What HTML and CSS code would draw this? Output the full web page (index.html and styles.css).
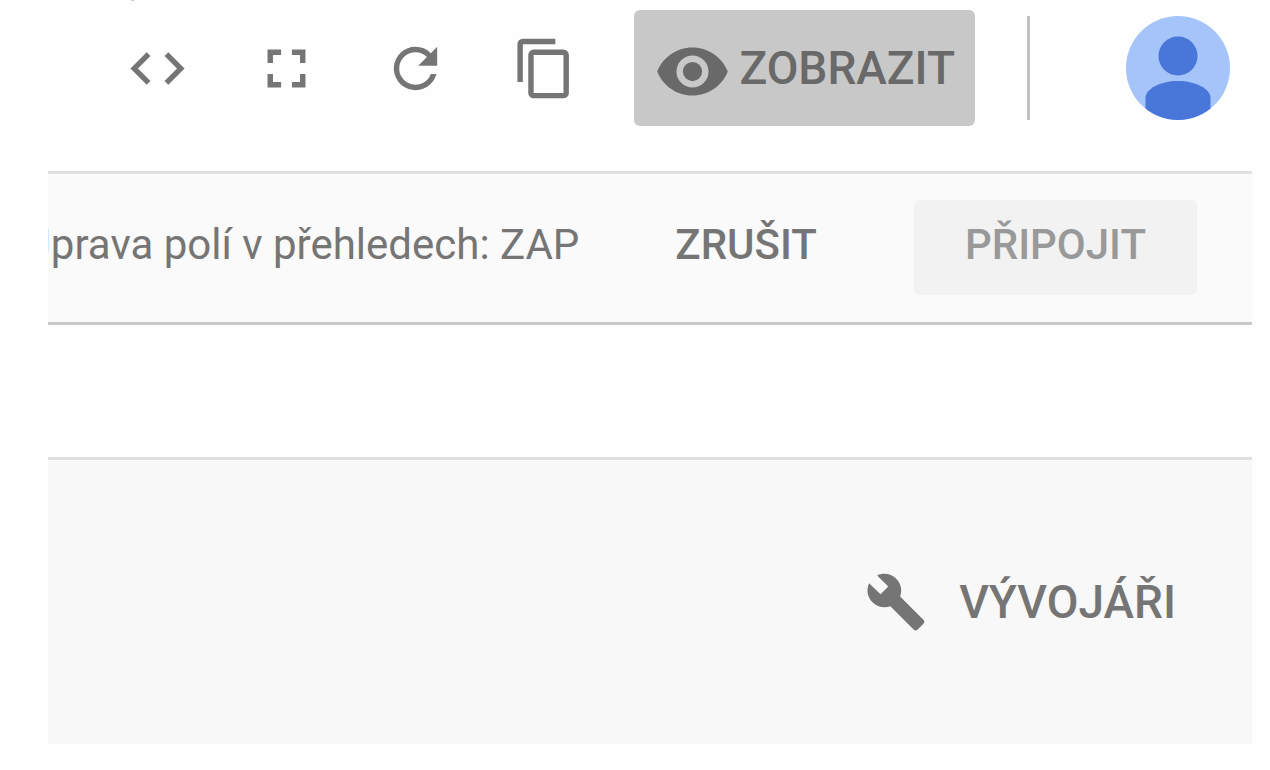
FILE: index.html
```html
<!DOCTYPE html>
<html lang="cs">
<head>
<meta charset="utf-8">
<title>Úprava polí v přehledech</title>
<link rel="stylesheet" href="styles.css">
</head>
<body>
<header class="toolbar">
  <div class="tools">
    <button class="icon-button" type="button" aria-label="Vložit kód"><svg class="icon" viewBox="0 0 24 24"><path d="M9.4 16.6 4.8 12l4.6-4.6L8 6l-6 6 6 6zM14.6 16.6 19.2 12l-4.6-4.6L16 6l6 6-6 6z"/></svg></button>
    <button class="icon-button" type="button" aria-label="Celá obrazovka"><svg class="icon" viewBox="0 0 24 24"><path d="M7 14H5v5h5v-2H7zM5 10h2V7h3V5H5zM17 17h-3v2h5v-5h-2zM14 5v2h3v3h2V5z"/></svg></button>
    <button class="icon-button" type="button" aria-label="Obnovit"><svg class="icon" viewBox="0 0 24 24"><path d="M17.65 6.35A7.96 7.96 0 0 0 12 4a8 8 0 1 0 7.73 10h-2.08A6 6 0 1 1 12 6c1.66 0 3.14.69 4.22 1.78L13 11h7V4z"/></svg></button>
    <button class="icon-button" type="button" aria-label="Kopírovat"><svg class="icon" viewBox="0 0 24 24"><path d="M16 1H4a2 2 0 0 0-2 2v14h2V3h12zm3 4H8a2 2 0 0 0-2 2v14a2 2 0 0 0 2 2h11a2 2 0 0 0 2-2V7a2 2 0 0 0-2-2zm0 16H8V7h11z"/></svg></button>
  </div>
  <button class="view-button" type="button"><svg class="view-icon" viewBox="0 0 24 24"><path d="M12 4.500C7 4.500 2.730 7.610 1 12c1.730 4.390 6 7.500 11 7.500s9.270-3.110 11-7.500c-1.730-4.390-6-7.500-11-7.500zM12 17a5 5 0 1 1 0-10 5 5 0 0 1 0 10zm0-8a3 3 0 1 0 0 6 3 3 0 0 0 0-6z"/></svg>ZOBRAZIT</button>
  <div class="divider"></div>
  <button class="avatar" type="button" aria-label="Účet"><svg class="avatar-art" viewBox="0 0 104 104"><circle cx="52" cy="40" r="19.500"/><path d="M19.500 104V82C19.500 73 34 65 52 65s32.500 8 32.500 17v22z"/></svg></button>
</header>
<main class="content">
  <section class="edit-bar">
    <p class="message">Úprava polí v přehledech: ZAP</p>
    <button class="text-button" type="button">ZRUŠIT</button>
    <button class="text-button connect" type="button" disabled>PŘIPOJIT</button>
  </section>
  <section class="panel">
    <button class="developers" type="button"><svg class="developers-icon" viewBox="0 0 24 24"><path d="M22.700 19l-9.100-9.100c.9-2.300.4-5-1.500-6.900-2-2-5-2.400-7.400-1.300L9 6 6 9 1.600 4.700C.4 7.100.9 10.100 2.900 12.100c1.900 1.900 4.600 2.400 6.900 1.500l9.100 9.100c.4.4 1 .4 1.400 0l2.300-2.300c.5-.4.5-1.100.1-1.400z"/></svg>VÝVOJÁŘI</button>
  </section>
</main>
</body>
</html>
```
FILE: styles.css
```css
* {
  box-sizing: border-box;
}

body {
  margin: 0;
  background: #fefefe;
  color: #757575;
  font-family: Roboto, "Noto Sans", sans-serif;
}

button {
  padding: 0;
  border: 0;
  background: none;
  color: inherit;
  font: inherit;
  font-weight: 500;
  white-space: nowrap;
}

svg {
  display: block;
  fill: currentColor;
}

.toolbar {
  position: relative;
  display: flex;
  align-items: center;
  justify-content: flex-end;
  padding: 10px 40px 45px 48px;
}

.toolbar::before {
  content: "";
  position: absolute;
  top: 0;
  left: 131px;
  width: 3px;
  height: 1px;
  background: #cccccc;
}

.tools {
  display: flex;
  gap: 64px;
  margin-right: 57px;
}

.icon {
  width: 65px;
  height: 65px;
}

.view-button {
  padding: 0 20px;
  border-radius: 6px;
  background: #c8c8c8;
  color: #696969;
  font-size: 46px;
  line-height: 116px;
}

.view-icon {
  display: inline-block;
  width: 77px;
  height: 77px;
  margin-right: 9px;
  vertical-align: middle;
}

.divider {
  width: 3px;
  height: 104px;
  margin: 0 96px 0 52px;
  background: #c2c2c2;
}

.avatar {
  width: 104px;
  height: 104px;
  border-radius: 50%;
  overflow: hidden;
  background: #a5c4fa;
  color: #4876d9;
}

.content {
  margin: 0 18px 26px 48px;
}

.edit-bar {
  display: flex;
  align-items: baseline;
  justify-content: flex-end;
  padding: 26px 55px 27px 0;
  border-top: 3px solid #e0e0e0;
  border-bottom: 3px solid #c9c9c9;
  background: #fafafa;
  overflow: hidden;
  font-size: 42px;
}

.message {
  margin: 0 45px 0 0;
  white-space: nowrap;
}

.text-button {
  height: 95px;
  padding: 0 51px 6px;
}

.connect {
  margin-left: 46px;
  border-radius: 5px;
  background: #f2f2f2;
  color: #999999;
}

.panel {
  display: flex;
  justify-content: flex-end;
  margin-top: 132px;
  padding: 111px 76px;
  border-top: 3px solid #e0e0e0;
  background: #f8f8f8;
}

.developers {
  display: flex;
  align-items: center;
  gap: 32px;
  font-size: 46px;
}

.developers-icon {
  width: 62px;
  height: 62px;
}
```
